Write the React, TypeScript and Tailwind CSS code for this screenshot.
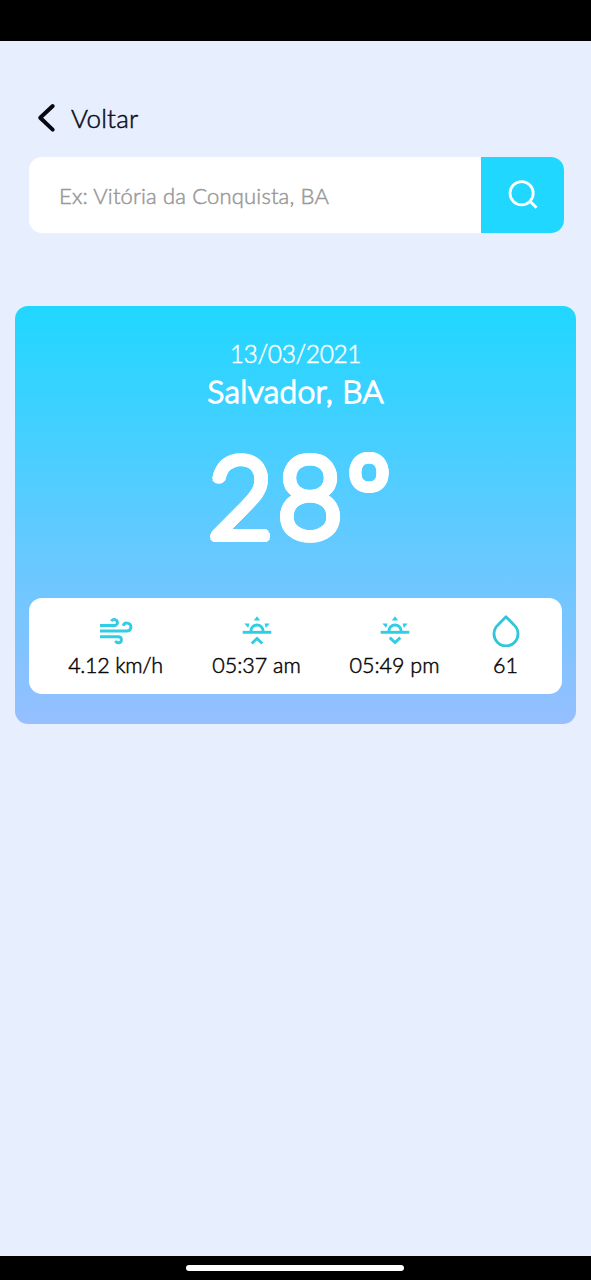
import type { ReactNode } from 'react'

function WindIcon() {
  return (
    <svg width="34" height="28" viewBox="0 0 34 28" fill="none" stroke="#2fcde6" strokeWidth="2.9" strokeLinejoin="round">
      <path d="M1 8.5h15a3.1 3.1 0 1 0-3.6-4.2" />
      <path d="M1 14h27.3a4 4 0 1 0-4.2-5.2" />
      <path d="M1 19.8h18.8a3 3 0 1 1-3.2 4" />
    </svg>
  )
}

function SunIcon({ down = false }: { down?: boolean }) {
  return (
    <svg width="30" height="30" viewBox="0 0 30 30" fill="none" stroke="#2fcde6" strokeWidth="2.9">
      <path d="M.7 16.3h28.6" />
      <path d="M8.9 16.3v-1.3a6.1 6 0 0 1 12.2 0v1.3" />
      <path d="M15 .2l3.2 4.4h-6.4zM2.4 7.4h5l-1.2 4.6zM27.6 7.4h-5l1.2 4.6z" fill="#2fcde6" stroke="none" />
      <path d={down ? 'M9.7 21.6l5.3 4.9 5.3-4.9' : 'M9.7 27.5l5.3-5 5.3 5'} />
    </svg>
  )
}

function DropIcon() {
  return (
    <svg width="28" height="32" viewBox="0 0 28 32" fill="none" stroke="#2fc6dc" strokeWidth="2.8" strokeLinejoin="round">
      <path d="M14 1.8l7.8 8A12 12 0 1 1 6.2 9.8z" />
    </svg>
  )
}

function Stat({ icon, label, box }: { icon: ReactNode; label: string; box: string }) {
  return (
    <div className={`flex flex-col items-center ${box}`}>
      <div className="flex h-8 items-center justify-center">{icon}</div>
      <span className="mt-1 whitespace-nowrap text-[21.5px] leading-[28px] text-[#080808]">{label}</span>
    </div>
  )
}

export default function App() {
  return (
    <div className="flex h-[1280px] w-[591px] flex-col overflow-hidden bg-[#e7efff] font-['Lato','Noto_Sans',sans-serif] font-light [-webkit-text-stroke:0.5px_currentColor]">
      <div className="h-[41px] shrink-0 bg-black" />
      <main className="flex-1">
        <button className="ml-[37px] mt-[60px] flex h-[34px] items-center">
          <svg width="19" height="30" viewBox="0 0 19 30" fill="none" stroke="#080812" strokeWidth="4" strokeLinecap="round" strokeLinejoin="round">
            <path d="M15.7 3L3.2 14.8 15.7 26.6" />
          </svg>
          <span className="ml-[15px] text-[26px] leading-[34px] tracking-[0.2px] text-[#0b0b16]">Voltar</span>
        </button>

        <div className="ml-[29px] mt-[22px] flex h-[76px] w-[535px] overflow-hidden rounded-[13px] bg-white">
          <input
            className="min-w-0 flex-1 bg-transparent pl-[30px] text-[22px] tracking-[0.17px] outline-none placeholder:text-[#999999]"
            placeholder="Ex: Vitória da Conquista, BA"
          />
          <button className="flex w-[83px] items-center justify-center bg-[#20d7ff]">
            <svg width="30" height="30" viewBox="0 0 30 30" fill="none" stroke="white" strokeWidth="2.8">
              <circle cx="13.6" cy="13.2" r="11.6" />
              <path d="M21.5 20.8l7 7" />
            </svg>
          </button>
        </div>

        <section className="ml-[15px] mt-[73px] flex h-[418px] w-[561px] flex-col items-center rounded-[13px] bg-linear-to-b/srgb from-[#20d7ff] to-[#96bfff] text-white">
          <p className="mt-[32px] text-[24.5px] leading-[32px] tracking-[-0.35px]">13/03/2021</p>
          <h1 className="mt-[1px] text-[32px] leading-[40px] tracking-[0.3px] [-webkit-text-stroke:1.5px_white]">Salvador, BA</h1>
          <p className="ml-[8px] mt-[13px] flex h-[140px] text-[113px] leading-[140px] tracking-[4px] [-webkit-text-stroke:1.5px_white] [text-shadow:4px_0_#fff,-4px_0_#fff,0_4px_#fff,0_-4px_#fff,2.8px_2.8px_#fff,-2.8px_2.8px_#fff,2.8px_-2.8px_#fff,-2.8px_-2.8px_#fff,3.7px_1.5px_#fff,-3.7px_1.5px_#fff,3.7px_-1.5px_#fff,-3.7px_-1.5px_#fff,1.5px_3.7px_#fff,-1.5px_3.7px_#fff,1.5px_-3.7px_#fff,-1.5px_-3.7px_#fff]">
            28<span className="-mt-[3px] text-[110px] tracking-normal [-webkit-text-stroke:2px_white]">º</span>
          </p>
          <div className="mt-[34px] flex h-[96px] w-[533px] rounded-[13px] bg-white pt-[17px]">
            <Stat icon={<WindIcon />} label="4.12 km/h" box="ml-[36px] w-[101px] tracking-[-0.25px]" />
            <Stat icon={<SunIcon />} label="05:37 am" box="ml-[40px] w-[101px]" />
            <Stat icon={<SunIcon down />} label="05:49 pm" box="ml-[37px] w-[101px]" />
            <Stat icon={<DropIcon />} label="61" box="ml-[45px] w-[31px]" />
          </div>
        </section>
      </main>
      <div className="flex h-6 shrink-0 items-center justify-center bg-black">
        <div className="mr-px h-[6px] w-[218px] rounded-full bg-white" />
      </div>
    </div>
  )
}
